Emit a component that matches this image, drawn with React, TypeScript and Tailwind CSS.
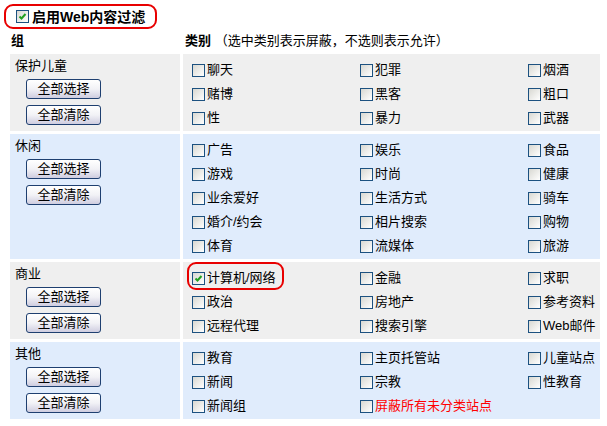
import React from "react";

type Item = { label: string; checked?: boolean; red?: boolean; circled?: boolean };
type Group = { name: string; tone: "gray" | "blue"; items: Item[] };

const groups: Group[] = [
  {
    name: "保护儿童",
    tone: "gray",
    items: [
      { label: "聊天" }, { label: "犯罪" }, { label: "烟酒" },
      { label: "赌博" }, { label: "黑客" }, { label: "粗口" },
      { label: "性" }, { label: "暴力" }, { label: "武器" },
    ],
  },
  {
    name: "休闲",
    tone: "blue",
    items: [
      { label: "广告" }, { label: "娱乐" }, { label: "食品" },
      { label: "游戏" }, { label: "时尚" }, { label: "健康" },
      { label: "业余爱好" }, { label: "生活方式" }, { label: "骑车" },
      { label: "婚介/约会" }, { label: "相片搜索" }, { label: "购物" },
      { label: "体育" }, { label: "流媒体" }, { label: "旅游" },
    ],
  },
  {
    name: "商业",
    tone: "gray",
    items: [
      { label: "计算机/网络", checked: true, circled: true }, { label: "金融" }, { label: "求职" },
      { label: "政治" }, { label: "房地产" }, { label: "参考资料" },
      { label: "远程代理" }, { label: "搜索引擎" }, { label: "Web邮件" },
    ],
  },
  {
    name: "其他",
    tone: "blue",
    items: [
      { label: "教育" }, { label: "主页托管站" }, { label: "儿童站点" },
      { label: "新闻" }, { label: "宗教" }, { label: "性教育" },
      { label: "新闻组" }, { label: "屏蔽所有未分类站点", red: true },
    ],
  },
];

function Box({ checked }: { checked?: boolean }) {
  return (
    <span className="relative inline-block w-[13px] h-[13px] shrink-0 border border-[#1c5180] bg-linear-to-br from-[#d8d8d2] to-white">
      {checked && (
        <svg className="absolute left-[1px] top-[1px]" width="9" height="9" viewBox="0 0 9 9">
          <path d="M1.5 4.5 L3.5 6.5 L7.5 2" fill="none" stroke="#21a121" strokeWidth="2" />
        </svg>
      )}
    </span>
  );
}

function XpButton({ children }: { children: React.ReactNode }) {
  return (
    <button className="w-[75px] h-[20px] border border-[#1e3f70] rounded-[3px] bg-linear-to-b from-white via-[#f2f2f6] to-[#cfcde0] text-[13px] leading-[18px] text-black">
      {children}
    </button>
  );
}

export default function App() {
  return (
    <div className="w-[607px] h-[426px] bg-white text-[13px] text-black font-['Liberation_Sans','Noto_Sans_CJK_SC',sans-serif] overflow-hidden">
      <div className="pt-[4px] pl-[4px]">
        <div className="flex items-center gap-[3px] w-[153px] h-[25px] border-2 border-[#e80000] rounded-[9px] pl-[10px]">
          <Box checked />
          <span className="text-[14px] font-bold leading-none">启用Web内容过滤</span>
        </div>
      </div>

      <div className="mt-[3px] mb-[4px] h-[18px] ml-[10px] grid grid-cols-[170px_417px] gap-x-[3px] items-center font-bold leading-[18px]">
        <div className="pl-[1px]">组</div>
        <div className="pl-[2px]">
          类别 <span className="font-normal">（选中类别表示屏蔽，不选则表示允许）</span>
        </div>
      </div>

      <div className="ml-[10px] grid grid-cols-[170px_417px] gap-[3px]">
        {groups.map((g) => {
          const bg = g.tone === "gray" ? "bg-[#efefef]" : "bg-[#e0ecfc]";
          return (
            <React.Fragment key={g.name}>
              <div className={`${bg} pt-[2px] pl-[5px]`}>
                <div className="leading-[20px]">{g.name}</div>
                <div className="ml-[11px] mt-[3px] flex flex-col gap-[6px]">
                  <XpButton>全部选择</XpButton>
                  <XpButton>全部清除</XpButton>
                </div>
              </div>
              <div className={`${bg} pt-[4px] pb-[1px] pl-[9px] grid grid-cols-[168px_168px_1fr]`}>
                {g.items.map((it) => (
                  <div key={it.label} className="relative flex items-center gap-[2px] h-[24px]">
                    <Box checked={it.checked} />
                    <span className={`whitespace-nowrap ${it.red ? "text-[#ff0000]" : ""}`}>{it.label}</span>
                    {it.circled && (
                      <span className="absolute left-[-5px] top-[-4px] w-[97px] h-[28px] border-2 border-[#e80000] rounded-[9px]" />
                    )}
                  </div>
                ))}
              </div>
            </React.Fragment>
          );
        })}
      </div>
    </div>
  );
}
